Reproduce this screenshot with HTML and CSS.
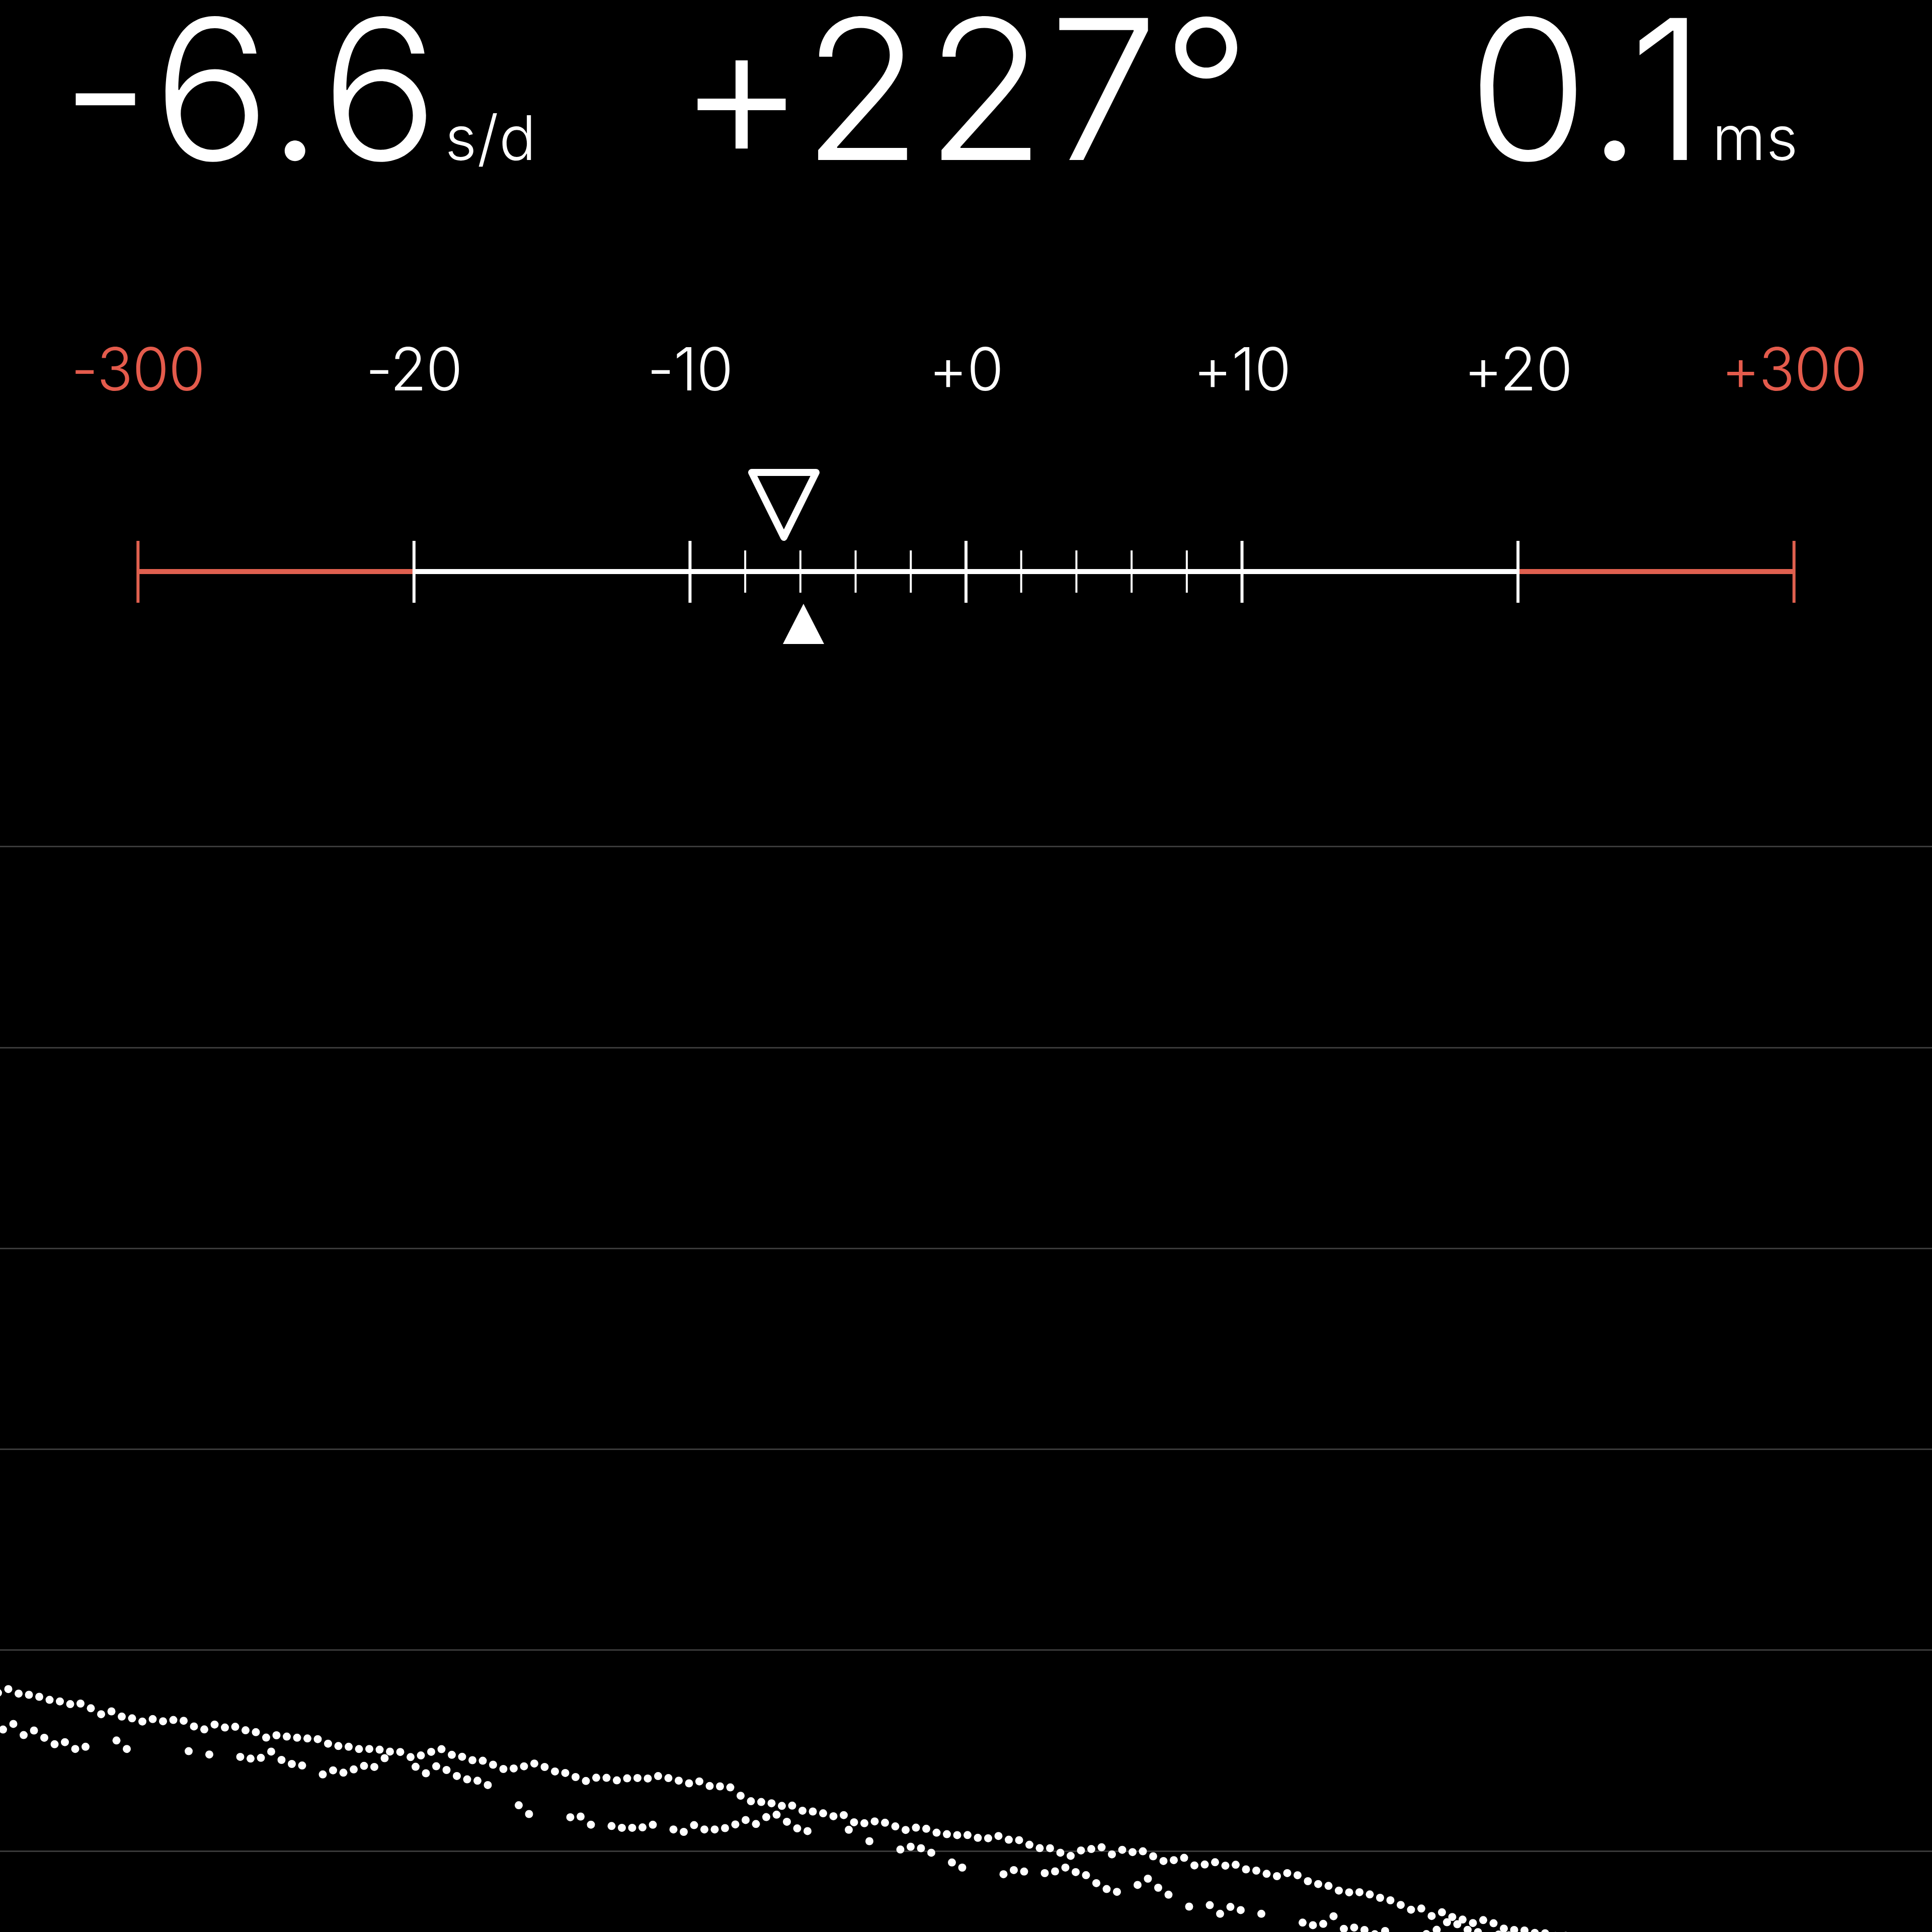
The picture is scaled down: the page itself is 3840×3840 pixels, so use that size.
FILE: index.html
```html
<!DOCTYPE html>
<html lang="en">
<head>
    <meta charset="UTF-8">
    <title>Timegrapher</title>
    <link rel="stylesheet" href="styles.css">
</head>
<body>

    <div class="readout">
        <div class="value rate">-6.6<span class="unit">s/d</span></div>
        <div class="value angle">+227°</div>
        <div class="value beat">0.1<span class="unit">ms</span></div>
    </div><!--readout-->

    <div class="labels">
        <span class="warn">-300</span>
        <span>-20</span>
        <span>-10</span>
        <span>+0</span>
        <span>+10</span>
        <span>+20</span>
        <span class="warn">+300</span>
    </div><!--labels-->

    <svg class="gauge" viewBox="0 0 3840 363" width="3840" height="363">
        <g class="bar"></g>
        <polygon class="pointer-open" points="1494,19 1622,19 1558,148"/>
        <polygon class="pointer-fill" points="1556,360 1638,360 1597,280"/>
    </svg>

    <div class="chart">
        <div class="row"></div>
        <div class="row"></div>
        <div class="row"></div>
        <div class="row"></div>
        <div class="row"></div>
        <div class="row"></div>
        <div class="row last"></div>
    </div><!--chart-->

    <svg class="dots" viewBox="0 0 3840 3840" width="3840" height="3840"></svg>

    <script>
        let ns = 'http://www.w3.org/2000/svg';
        let step = 3840 / 7;
        let center = 1920;

        //눈금
        let bar = document.querySelector('.bar');

        function line(x1, y1, x2, y2, cls){
            let el = document.createElementNS(ns, 'line');
            el.setAttribute('x1', x1);
            el.setAttribute('y1', y1);
            el.setAttribute('x2', x2);
            el.setAttribute('y2', y2);
            el.setAttribute('class', cls);
            bar.appendChild(el);
        }

        line(step * 0.5, 216, step * 1.5, 216, 'track warn');
        line(step * 1.5, 216, step * 5.5, 216, 'track');
        line(step * 5.5, 216, step * 6.5, 216, 'track warn');

        for(let i = 0; i < 7; i++){
            let x = step * (i + 0.5);
            let cls = (i == 0 || i == 6) ? 'major warn' : 'major';
            line(x, 155, x, 278, cls);
        }

        //-10 ~ +10 사이만 2단위 눈금
        for(let k = -4; k <= 4; k++){
            if(k == 0) continue;
            let x = center + k * step / 5;
            line(x, 174, x, 258, 'minor');
        }

        //점 그래프
        let seed = 7;
        function rnd(){
            seed = (seed * 16807) % 2147483647;
            return (seed - 1) / 2147483646;
        }

        function base(x){
            return 3368 + 0.1232 * x + 0.00000895 * x * x;
        }

        let dots = document.querySelector('.dots');
        function dot(x, y){
            if(y > 3850) return;
            let c = document.createElementNS(ns, 'circle');
            c.setAttribute('cx', x.toFixed(1));
            c.setAttribute('cy', y.toFixed(1));
            c.setAttribute('r', 8);
            dots.appendChild(c);
        }

        let wave = 0;
        for(let x = -4; x < 3300; x += 20.5){
            wave += (rnd() - 0.5) * 14;
            if(wave > 14) wave = 14;
            if(wave < -14) wave = -14;
            dot(x, base(x) + wave + (rnd() - 0.5) * 10);
        }

        let off = 60;
        for(let x = 6; x < 3300; x += 20.5){
            off += (rnd() - 0.5) * 30;
            if(off > 115) off = 115;
            if(off < 30) off = 30;
            if(rnd() < 0.72){
                dot(x, base(x) + off + (rnd() - 0.5) * 14);
            }
        }
    </script>
</body>
</html>
```

FILE: styles.css
```css
*{
    margin: 0;
    padding: 0;
}

body{
    position: relative;
    width: 3840px;
    height: 3840px;
    overflow: hidden;
    background-color: #000;
    color: #fff;
    font-family: Inter, "Noto Sans", sans-serif;
    font-weight: 280;
}

.readout{
    display: grid;
    grid-template-columns: 1188px 1464px 1188px;
    align-items: baseline;
    height: 420px;
    padding-top: 22px;
    box-sizing: border-box;
}

.value{
    justify-self: center;
    font-size: 388px;
    line-height: 0.8;
    letter-spacing: 7px;
    white-space: nowrap;
}

.unit{
    font-size: 122px;
    letter-spacing: 1px;
    margin-left: 6px;
}

.labels{
    display: grid;
    grid-template-columns: repeat(7, 1fr);
    margin-top: 251px;
    height: 125px;
    font-size: 118px;
    line-height: 125px;
    letter-spacing: -1px;
    text-align: center;
}

.labels .warn{
    color: #e45b4c;
}

.gauge{
    display: block;
    margin-top: 124px;
}

.track{
    stroke: #fff;
    stroke-width: 10;
}

.major{
    stroke: #fff;
    stroke-width: 6;
}

.minor{
    stroke: #fff;
    stroke-width: 4;
}

.gauge .warn{
    stroke: #e0604f;
}

.pointer-open{
    fill: none;
    stroke: #fff;
    stroke-width: 14;
    stroke-linejoin: round;
}

.pointer-fill{
    fill: #fff;
}

.chart{
    margin-top: 2px;
}

.row{
    height: 399.3px;
    border-bottom: 3px solid #3a3a3a;
    box-sizing: border-box;
}

.row.last{
    height: 150px;
    border-bottom: none;
}

.dots{
    position: absolute;
    top: 0;
    left: 0;
    pointer-events: none;
    fill: #fff;
}
```
